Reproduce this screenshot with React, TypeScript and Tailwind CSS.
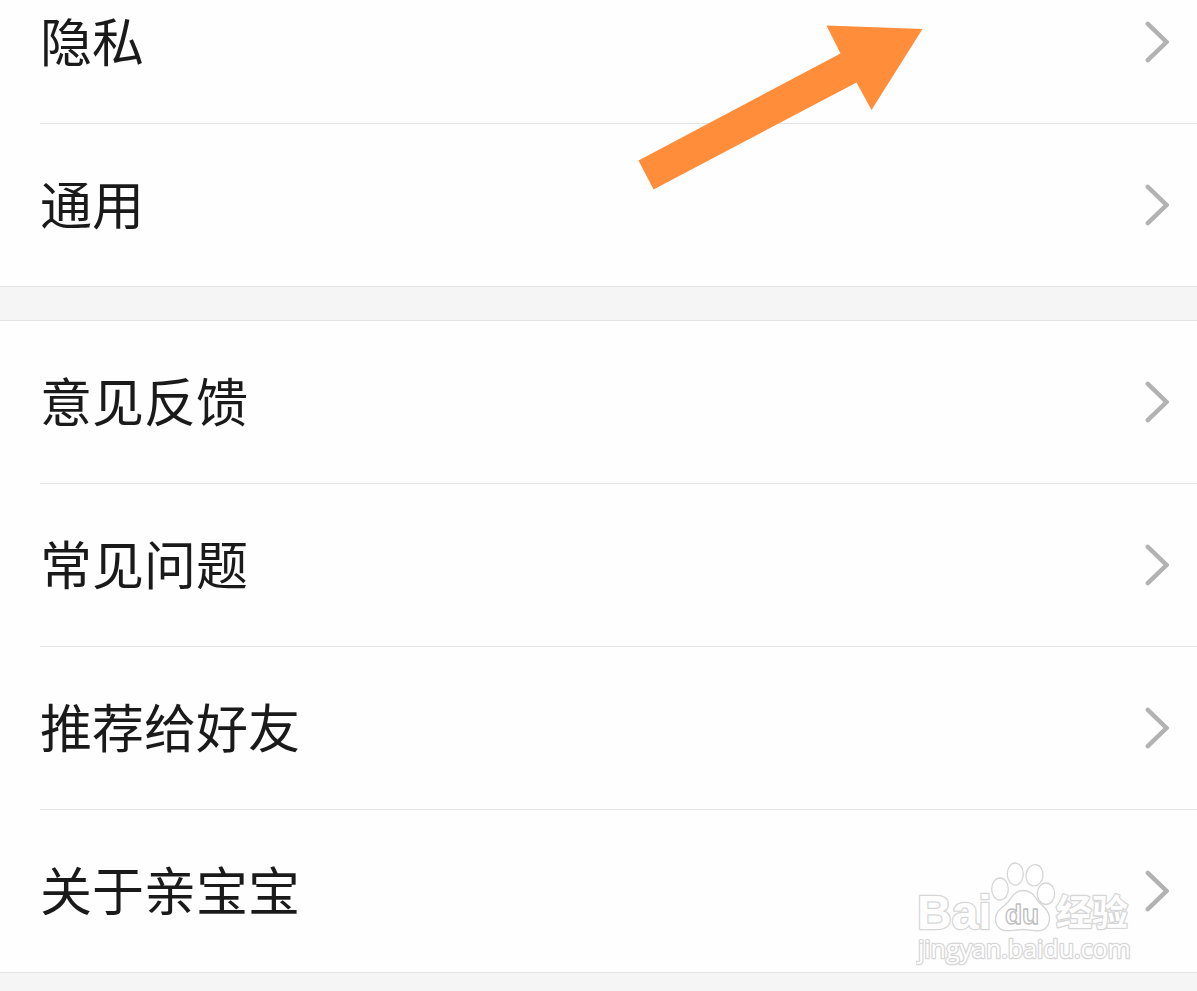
type Item = {
  label: string;
  href: string;
};

const preferences: Item[] = [
  { label: '隐私', href: '#privacy' },
  { label: '通用', href: '#general' },
];

const support: Item[] = [
  { label: '意见反馈', href: '#feedback' },
  { label: '常见问题', href: '#faq' },
  { label: '推荐给好友', href: '#share' },
  { label: '关于亲宝宝', href: '#about' },
];

function Chevron() {
  return (
    <svg className="h-11 w-6 shrink-0" viewBox="0 0 24 44" fill="none" stroke="#b2b2b2" strokeWidth={4.4} strokeLinecap="round" aria-hidden="true">
      <path d="M2.800 3.800L21.500 22L2.800 40.200" strokeLinejoin="miter" />
    </svg>
  );
}

function Group({ items }: { items: Item[] }) {
  return (
    <ul className="border-b border-[#e4e4e4] bg-[#fefefe] pl-10">
      {items.map((item) => (
        <li key={item.href} className="border-b border-[#e4e4e4] last:border-b-0">
          <a href={item.href} className="flex h-[162px] items-center justify-between pr-7 text-[52px] leading-none text-[#1a1a1a]">
            <span className="pb-1">{item.label}</span>
            <Chevron />
          </a>
        </li>
      ))}
    </ul>
  );
}

function PointerArrow() {
  return (
    <svg className="pointer-events-none absolute right-[273px] top-6 h-[168px] w-[288px]" viewBox="0 0 288 168" aria-hidden="true">
      <path d="M190.5 1.5L286.5 5L235.5 86L220.5 58.5L17.5 165.5L2.5 136.5L204.5 29.5Z" fill="#ff8d3a" />
    </svg>
  );
}

function Watermark() {
  return (
    <svg
      className="pointer-events-none absolute bottom-[23px] right-[61px] h-[108px] w-[220px]"
      viewBox="0 0 220 108"
      fill="#ffffff"
      stroke="#d6d6d6"
      strokeWidth={1.3}
      strokeLinejoin="round"
    >
      <ellipse cx="84" cy="29" rx="8.3" ry="11" />
      <ellipse cx="99.3" cy="14" rx="8" ry="11" />
      <ellipse cx="118.5" cy="15.3" rx="8.5" ry="10.7" transform="rotate(8 118.5 15.3)" />
      <ellipse cx="130" cy="33.7" rx="8.7" ry="10.7" />
      <path d="M107 30.5C99 30.5 96 37 92 42C88 47 79.500 50 79.500 59C79.500 66 84 70.700 91 70.700C97 70.700 101 69.500 107 69.500C113 69.500 117 71 123 70.700C130 70.500 133.500 65 133.500 58C133.500 50 126 46 122 41C118 35.500 115 30.500 107 30.500Z" />
      <g strokeWidth={2.6} paintOrder="stroke">
        <text x="1" y="69" fontSize="48" fontWeight="700" fontFamily="Liberation Sans, sans-serif">Bai</text>
        <text x="140" y="66" fontSize="36" fontWeight="700" fontFamily="Noto Sans CJK SC, sans-serif">经验</text>
        <text x="2" y="98" fontSize="25" fontFamily="Open Sans, sans-serif">jingyan.baidu.com</text>
      </g>
      <text x="89" y="64" fontSize="28" fontWeight="700" stroke="#bdbdbd" fontFamily="Liberation Sans, sans-serif">du</text>
    </svg>
  );
}

export default function App() {
  return (
    <main className="relative min-h-screen overflow-hidden bg-[#f5f5f5] pb-[18px] font-['Noto_Sans_CJK_SC',sans-serif]">
      {/* the list is scrolled, so the first row is partly cut off */}
      <div className="relative -mt-[39px] flex flex-col gap-[33px]">
        <Group items={preferences} />
        <div className="border-t border-[#e4e4e4]">
          <Group items={support} />
        </div>
      </div>
      <PointerArrow />
      <Watermark />
    </main>
  );
}
